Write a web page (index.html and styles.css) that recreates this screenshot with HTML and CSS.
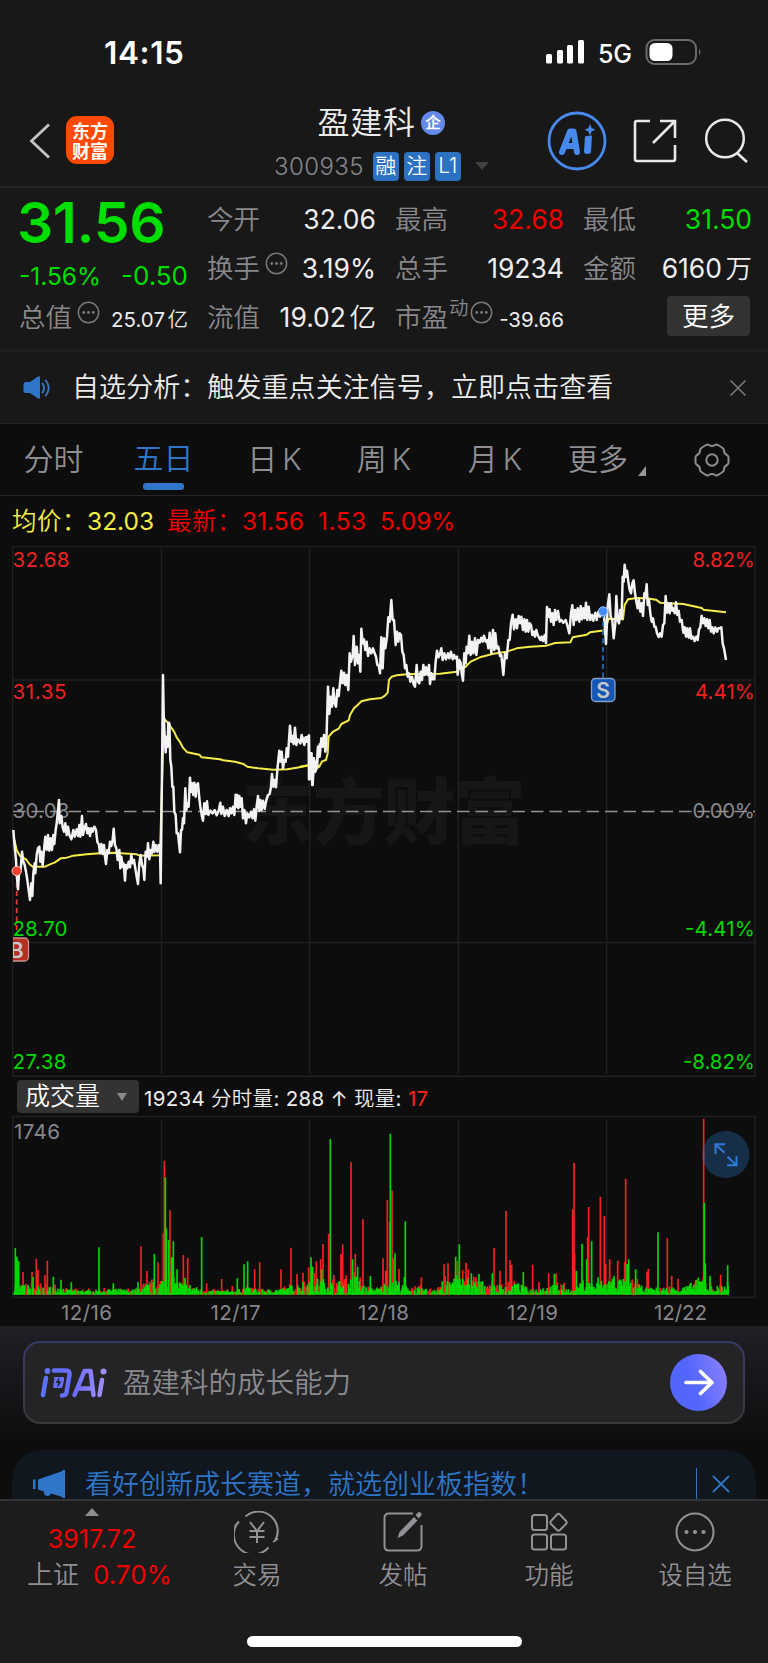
FILE: index.html
```html
<!DOCTYPE html>
<html lang="zh-CN">
<head>
<meta charset="utf-8">
<title>盈建科 300935</title>
<link rel="stylesheet" href="styles.css">
</head>
<body>
<svg class="defs" aria-hidden="true">
  <symbol id="dots" viewBox="0 0 24 24"><circle cx="12" cy="12" r="10.6" fill="none" stroke="#77777b" stroke-width="1.6"/><g fill="#77777b"><circle cx="7" cy="12" r="1.5"/><circle cx="12" cy="12" r="1.5"/><circle cx="17" cy="12" r="1.5"/></g></symbol>
  <linearGradient id="violet" x1="0" x2="1" y1="0.3" y2="0"><stop offset="0.3" stop-color="#5266fc"/><stop offset="1" stop-color="#9182fb"/></linearGradient>
  <linearGradient id="logo" gradientUnits="userSpaceOnUse" x1="0" x2="68" y1="0" y2="0"><stop offset="0" stop-color="#5872ff"/><stop offset=".5" stop-color="#6c6cff"/><stop offset="1" stop-color="#a594ff"/></linearGradient>
</svg>
<div class="phone">
  <div class="status">
    <span class="clock">14:15</span>
    <svg class="signals" viewBox="0 0 160 32" width="160" height="32">
      <g fill="#fff"><rect x="1" y="18" width="6" height="9.500" rx="1.500"/><rect x="12" y="14" width="6" height="13.500" rx="1.500"/><rect x="22" y="9" width="6" height="18.500" rx="1.500"/><rect x="33" y="4" width="6" height="23.500" rx="1.500"/></g>
      <text x="53" y="27" class="net" textLength="34">5G</text>
      <rect x="101.500" y="4" width="49.500" height="24" rx="8" fill="none" stroke="#6a6a6a" stroke-width="2"/>
      <rect x="104.500" y="7" width="23" height="18" rx="5.500" fill="#fff"/>
      <path d="M154 12.500q3 3.500 0 7z" fill="#6a6a6a"/>
    </svg>
  </div>

  <header class="head">
    <svg class="back" viewBox="0 0 22 36" width="22" height="36"><path d="M20 1.500 2.500 18 20 34.500" fill="none" stroke="#c4c4c4" stroke-width="2.800"/></svg>
    <div class="brand"><span>东方</span><span>财富</span></div>
    <div class="title">
      <div class="name">盈建科<b>企</b></div>
      <div class="code"><span>300935</span><i>融</i><i>注</i><i>L1</i><svg width="14" height="8" viewBox="0 0 14 8"><path d="M0 0h14L7 8z" fill="#404043"/></svg></div>
    </div>
    <svg class="ai" viewBox="0 0 60 60" width="60" height="60"><circle cx="30" cy="30" r="28" fill="none" stroke="#4889ee" stroke-width="2.800"/><path d="M15 41 23 20.500h3.500L30 41M18.500 35H29" fill="none" stroke="#4889ee" stroke-width="6" stroke-linejoin="round" stroke-linecap="round"/><path d="M38 25.500q3.500-1 7-1l-1 16q0 2.500-3.500 2.500T37 40.500zM43 13l1.600 4 3.900 1.800-3.900 1.700L43 24.500l-1.600-4-3.900-1.700 3.900-1.800z" fill="#4889ee"/></svg>
    <svg class="share" viewBox="0 0 44 44" width="44" height="44"><path d="M17 2H4Q2 2 2 4v36q0 2 2 2h36q2 0 2-2V26M27 2h15v17M42 2 20 24" fill="none" stroke="#e8e8e8" stroke-width="2.600"/></svg>
    <svg class="search" viewBox="0 0 46 46" width="46" height="46"><circle cx="21" cy="20.500" r="18.800" fill="none" stroke="#e8e8e8" stroke-width="2.500"/><path d="m33 35 10 9" stroke="#e8e8e8" stroke-width="2.600"/></svg>
  </header>

  <section class="quote">
    <div class="price">31.56</div>
    <div class="change"><span>-1.56%</span><span class="amt">-0.50</span></div>
    <div class="cell c1 r3"><label>总值</label><svg class="dots"><use href="#dots"/></svg><em class="small">25.07<u>亿</u></em></div>
    <div class="cell c2 r1"><label>今开</label><em>32.06</em></div>
    <div class="cell c2 r2"><label>换手</label><svg class="dots"><use href="#dots"/></svg><em>3.19%</em></div>
    <div class="cell c2 r3"><label>流值</label><em>19.02<u>亿</u></em></div>
    <div class="cell c3 r1"><label>最高</label><em class="red">32.68</em></div>
    <div class="cell c3 r2"><label>总手</label><em>19234</em></div>
    <div class="cell c3 r3"><label>市盈</label><small>动</small><svg class="dots tight"><use href="#dots"/></svg><em class="small">-39.66</em></div>
    <div class="cell c4 r1"><label>最低</label><em class="green">31.50</em></div>
    <div class="cell c4 r2"><label>金额</label><em>6160<u>万</u></em></div>
    <div class="cell c4 r3"><button class="more">更多</button></div>
  </section>

  <section class="notice">
    <svg width="28" height="24" viewBox="0 0 28 24"><path d="M3 6h4l8-5.500q2-1 2 1v20q0 2-2 1L7 17H3q-2.500 0-2.500-2.500v-6Q.5 6 3 6z" fill="#2f75c8"/><path d="M19.500 7.500q3 4.500 0 9M22.800 4.500q6 7.500 0 15" fill="none" stroke="#2f75c8" stroke-width="1.900" stroke-linecap="round"/></svg>
    <p>自选分析：触发重点关注信号，立即点击查看</p>
    <svg width="16" height="16" viewBox="0 0 16 16"><path d="m.5.500 15 15m0-15-15 15" stroke="#7d7d80" stroke-width="1.500"/></svg>
  </section>

  <nav class="tabs">
    <span>分时</span><span class="on">五日</span><span>日<u>K</u></span><span>周<u>K</u></span><span>月<u>K</u></span>
    <span class="drop">更多<svg width="8" height="10" viewBox="0 0 8 10"><path d="M8 0v10H0z" fill="#99999d"/></svg></span>
    <span><svg width="36" height="34" viewBox="-18 -17 36 34"><path d="M-6-15q2-1 3 0 3 2 6 0 1-1 3 0l4 2.500q2 1.500 2 3 0 3 3 4.500 1.500 1 1.500 2.500v5q0 1.500-1.500 2.500-3 1.500-3 4.500 0 1.500-2 3L6 15q-2 1-3 0-3-2-6 0-1 1-3 0l-4-2.500q-2-1.500-2-3 0-3-3-4.500-1.500-1-1.500-2.500v-5q0-1.500 1.500-2.500 3-1.500 3-4.500 0-1.500 2-3z" fill="none" stroke="#8d8d91" stroke-width="2"/><circle r="5.700" fill="none" stroke="#8d8d91" stroke-width="2"/></svg></span>
  </nav>

  <div class="legend"><span class="yellow">均价：</span><span class="yellow n1">32.03</span><span>最新：</span><span class="n2">31.56</span><span class="n3">1.53</span><span>5.09%</span></div>

  <svg class="chart" viewBox="0 546 768 532" width="768" height="532">
    <text x="242" y="838" class="watermark" textLength="284">东方财富</text>
    <g fill="none" stroke="#202022" stroke-width="1.400">
      <path d="M12.700 546.500H755V1076.300H12.700zM161.500 548.500V1074M309.700 548.500V1074M458.300 548.500V1074M606.700 548.500V1074M13 680H755M13 942.500H755"/>
    </g>
    <g class="axis red-axis"><text x="12.500" y="566.700" textLength="57">32.68</text><text x="12.500" y="699" textLength="54">31.35</text><text x="692.500" y="566.700" textLength="62.500">8.82%</text><text x="695" y="699" textLength="60">4.41%</text></g>
    <g class="axis gray-axis"><text x="12.500" y="817.700" textLength="57">30.03</text><text x="692.500" y="817.700" textLength="62.500">0.00%</text></g>
    <path d="M13 811.500H755" stroke="#929298" stroke-width="1.500" stroke-dasharray="12.500 6" stroke-dashoffset="0" fill="none"/>
    <path d="M16.700 874V936" stroke="#dc3c2c" stroke-width="1.800" stroke-dasharray="5 3.500"/>
    <g class="axis green-axis"><text x="12.500" y="936" textLength="55">28.70</text><text x="12.500" y="1068.500" textLength="54">27.38</text><text x="685" y="936" textLength="70">-4.41%</text><text x="683" y="1068.500" textLength="72">-8.82%</text></g>
    <g transform="translate(0 540) scale(.33333)" fill="none" stroke-linejoin="round">
      <path class="avg" d="M41 890 50 930 60 948 78 958 88 972 98 980 135 980 150 973 165 967 182 955 200 953 220 947 260 943 300 940 340 938 410 943 420 947 480 946 489 620 493 537 503 548 513 562 522 574 530 592 540 606 549 623 562 637 598 644 605 652 660 658 670 661 705 665 728 671 742 680 775 685 820 689 862 688 890 683 928 676 960 679"/>
      <path class="line" d="M40 870 44 920 48 960 50 1000 54 1048 58 985 62 990 66 935 70 965 74 975 78 995 82 1020 86 1050 90 1080 94 1030 97 1068 100 1000 104 970 106 1000 110 945 114 925 118 920 121 965 124 935 128 978 132 930 136 890 140 930 144 885 148 932 152 895 156 930 160 885 163 912 167 870 170 850 173 820 177 780 179 850 184 828 188 862 192 875 196 850 200 885 204 860 208 885 214 898 220 870 224 890 230 868 234 888 238 855 241 890 246 828 249 885 254 862 258 852 262 880 266 865 270 888 274 865 278 875 283 860 288 870 292 905 297 915 300 940 304 912 308 942 312 915 315 950 318 972 322 930 326 940 330 905 334 918 338 900 341 866 345 915 349 925 353 960 358 930 361 985 364 950 368 980 371 970 375 1022 378 975 382 985 386 965 390 982 394 945 398 970 402 960 406 985 410 1010 414 1032 418 970 422 945 426 975 430 985 433 1020 437 935 441 950 444 910 448 958 452 930 456 940 460 905 463 935 467 915 472 935 476 915 480 925 482 1030 486 700 489 405 491 520 494 590 497 637 500 590 503 620 505 548 508 550 511 660 514 680 517 740 520 740 523 815 527 825 530 880 534 880 537 910 540 937 543 870 546 870 549 835 552 850 556 745 559 810 563 790 566 800 570 713 573 755 576 730 580 765 583 728 587 770 590 735 594 730 598 775 601 800 606 830 609 842 613 790 617 822 621 784 625 825 631 812 638 820 644 810 650 826 656 812 661 788 664 822 669 800 674 828 680 810 686 828 690 805 694 820 699 800 703 825 707 764 709 800 712 765 715 805 718 768 721 800 725 775 729 835 733 810 738 850 742 820 748 832 753 815 758 835 762 808 766 842 770 800 774 768 778 812 781 780 785 810 789 782 794 806 799 780 804 765 809 762 813 740 816 702 820 740 824 720 828 742 832 690 835 660 838 632 841 665 845 635 849 685 853 660 857 665 860 625 864 650 867 600 870 557 874 605 877 588 881 612 885 563 889 615 893 598 897 602 901 610 905 585 909 600 913 615 917 592 921 605 925 590 927 586 929 718 934 640 937 735 941 655 944 695 948 665 951 685 954 620 957 650 960 610"/>
    </g>
    <g transform="translate(300 540) scale(.33333)" fill="none" stroke-linejoin="round">
      <path class="avg" d="M0 680 28 675 34 685 50 684 58 680 66 664 78 660 83 640 86 590 98 576 116 566 124 552 146 541 150 525 162 505 173 495 184 484 210 478 244 474 255 467 263 458 267 420 275 410 290 406 330 402 420 401 470 395 482 382 496 381 512 365 540 352 580 341 620 335 650 325 690 320 740 317 765 309 811 307 818 292 860 284 870 277 916 271 925 236 969 238 974 195 984 178 1010 174 1040 175 1068 179 1080 188 1150 192 1205 204 1210 209 1278 217"/>
      <path class="line" d="M0 610 6 590 10 605 14 610 18 592 22 605 26 588 27 718 34 640 38 735 42 655 46 695 50 680 55 620 59 650 64 595 68 620 72 585 76 635 79 610 84 440 88 522 92 470 96 500 100 445 104 490 108 500 112 450 116 468 120 430 124 392 128 430 132 398 136 435 140 405 145 450 149 340 153 365 158 345 161 288 165 375 170 320 174 370 177 345 181 395 184 266 188 310 192 298 196 330 200 305 204 348 209 325 214 340 219 325 224 340 228 350 232 375 236 375 240 400 244 292 248 385 252 295 256 325 261 290 265 232 269 245 274 180 278 240 282 240 287 315 291 275 295 305 299 280 303 285 307 335 311 345 315 385 319 375 323 410 327 400 331 425 336 410 340 430 345 440 350 375 354 425 358 430 362 395 366 420 370 375 374 405 378 382 383 405 387 375 390 432 394 400 398 418 403 418 407 365 411 332 415 352 419 345 424 325 428 360 433 340 438 358 444 340 448 355 453 335 458 358 462 345 466 355 471 350 473 404 478 360 482 370 485 400 489 422 493 340 497 370 500 320 504 340 508 287 512 345 516 305 520 340 525 295 529 345 534 300 539 308 544 293 548 305 552 287 557 305 561 300 565 325 569 278 574 340 579 270 583 330 586 280 590 325 595 320 600 348 604 345 610 405 615 340 620 355 625 300 629 300 633 250 638 224 642 268 647 238 651 265 656 228 660 250 664 230 669 270 673 238 677 275 681 240 685 275 689 250 693 255 697 285 701 275 705 290 709 270 713 285 717 292 721 300 725 290 729 303 734 285 738 310 741 201 746 230 749 208 753 245 757 220 761 255 765 210 769 240 774 213 779 245 784 240 790 248 797 240 803 260 808 280 813 220 817 196 821 255 825 210 829 240 833 205 838 245 842 198 846 238 850 205 854 235 858 188 862 240 866 200 871 240 876 225 880 242 886 218 890 240 895 215 900 230 905 218 912 225 918 312 923 200 928 163 932 230 937 240 941 295 946 250 949 168 953 240 957 250 961 210 965 235 968 110 971 125 974 74 978 110 981 92 985 125 989 150 993 160 997 130 1001 121 1005 160 1009 185 1013 205 1017 180 1021 215 1025 190 1029 228 1033 160 1036 170 1040 133 1043 195 1047 180 1051 220 1055 245 1059 235 1063 260 1067 260 1071 280 1076 291 1080 280 1085 290 1089 255 1093 250 1097 168 1101 218 1105 190 1109 220 1113 190 1117 212 1121 205 1124 220 1128 187 1132 225 1136 212 1140 245 1145 240 1150 278 1154 262 1158 290 1162 265 1166 293 1170 265 1174 296 1179 290 1184 303 1189 290 1193 300 1197 268 1201 262 1205 227 1209 250 1213 235 1217 258 1221 238 1225 265 1229 240 1233 275 1237 262 1241 280 1246 262 1251 275 1255 265 1260 265 1264 262 1268 310 1272 325 1278 360"/>
    </g>
    <circle cx="16.700" cy="871" r="4.700" fill="#ea402d" stroke="#ffc9c2"/>
    <path d="M603 613V678" stroke="#2068c4" stroke-width="1.800" stroke-dasharray="5 3.500"/>
    <circle cx="603" cy="611.300" r="4.500" fill="#418cf0" stroke="#9bc7ff"/>
    <rect x="591.500" y="678.500" width="23.500" height="23" rx="4" fill="#1557b4" stroke="#849fc4" stroke-width="1.300"/><text x="603.200" y="698" class="mark" text-anchor="middle">S</text>
    <svg x="13" y="935" width="20" height="30" viewBox="13 935 20 30"><rect x="5" y="938" width="23.500" height="23" rx="4" fill="#b92e22" stroke="#c59590" stroke-width="1.300"/><text x="16.700" y="957.500" class="mark" text-anchor="middle">B</text></svg>
  </svg>

  <div class="volbar"><button>成交量<svg width="10" height="8" viewBox="0 0 10 8"><path d="M0 0h10L5 8z" fill="#8b8b8f"/></svg></button><span>19234 分时量: 288 ↑ 现量: <b>17</b></span></div>

  <svg class="volume" viewBox="0 1115 768 211" width="768" height="211">
    <path d="M12.700 1116.500H755V1297.300H12.700zM161.500 1119V1296M309.700 1119V1296M458.300 1119V1296M606.700 1119V1296" fill="none" stroke="#202022" stroke-width="1.400"/>
    <g id="bars" transform="translate(0 1070) scale(.33333)"></g>
    <text class="dates" x="14" y="1138.500" textLength="46">1746</text>
    <g class="dates"><text x="61" y="1319.500" textLength="51">12/16</text><text x="210.500" y="1319.500" textLength="50">12/17</text><text x="358" y="1319.500" textLength="51">12/18</text><text x="507" y="1319.500" textLength="51">12/19</text><text x="654" y="1319.500" textLength="53">12/22</text></g>
    <circle cx="725.800" cy="1154.500" r="23.600" fill="#2f75c8" fill-opacity=".32"/>
    <path d="M715.500 1154V1144.200H725M716 1144.700l8.500 8M736.500 1156V1165.300H727M736 1164.800l-8.500-8" fill="none" stroke="#2f7bd8" stroke-width="2"/>
  </svg>

  <section class="ask">
    <div class="askbox">
      <svg class="asklogo" viewBox="0 0 68 32" width="68" height="32"><g fill="none" stroke="url(#logo)" stroke-width="4.500" stroke-linecap="round" stroke-linejoin="round"><path d="M6 11 3 28M14 3.500h12q4 0 3.500 4l-3 18q-.5 3-4.500 3"/><path d="M62 13 59.500 28"/><path d="M34.500 28 44.500 4h6l3 24M38.500 21.500H52"/></g><g fill="url(#logo)"><circle cx="7.500" cy="4" r="2.900"/><circle cx="63.500" cy="4.500" r="3"/><path d="M14 10h9q1.500 0 1.200 1.500l-1.500 8q-.3 1.500-2 1.500h-6q-1.800 0-1.500-1.500l1.300-8Q12.700 10 14 10z"/></g><path d="m19.500 10-4 6h2.500l-.8 5 4.300-6.500H19z" fill="#242427"/></svg>
      <span>盈建科的成长能力</span>
      <svg width="57" height="57" viewBox="0 0 57 57"><circle cx="28.500" cy="28.500" r="28.500" fill="url(#violet)"/><path d="M16 28.500h26M30.500 17.500 42 28.500 30.500 39.500" fill="none" stroke="#fff" stroke-width="3.600" stroke-linecap="round" stroke-linejoin="round"/></svg>
    </div>
    <div class="promo">
      <svg width="33" height="28" viewBox="0 0 33 28"><path d="M0 9.500h2.500V19H0zM5 9.500 29.500 1V0H32v28h-2.500v-1L18 23.500q-1 3-4 2.500-3.500-.5-3-4.500L5 19.500z" fill="#2f75c8"/></svg>
      <span>看好创新成长赛道，就选创业板指数！</span>
      <i></i>
      <svg width="18" height="18" viewBox="0 0 18 18"><path d="m1 1 16 16M17 1 1 17" stroke="#2f75c8" stroke-width="1.800"/></svg>
    </div>
  </section>

  <footer class="dock">
    <div class="index"><svg width="14" height="8" viewBox="0 0 14 8"><path d="M0 8h14L7 0z" fill="#8d8d91"/></svg><b>3917.72</b><p>上证<b>0.70%</b></p></div>
    <div class="item"><svg width="46" height="42" viewBox="-23 -21 46 42"><path d="M-11.500-15.500A19.300 19.300 0 0 1 17.500 9.500M11.500 15.500A19.300 19.300 0 0 1-18.500-10M-22-6l4-4.500M16 10l5-3.500M-7-10l7 9 7-9M0-1v12M-7.500-1h15M-7.500 5h15" fill="none" stroke="#919196" stroke-width="2"/></svg>交易</div>
    <div class="item"><svg width="42" height="42" viewBox="-21 -21 42 42"><path d="M10-18.500h-24q-4.500 0-4.500 4.500v28q0 4.500 4.500 4.500h28q4.500 0 4.500-4.500V-7" fill="none" stroke="#919196" stroke-width="2"/><path d="m-5.500 6 2-6 14.500-15 3.500 3.500L0 3.500zM12.500-17l3-3q3.500 0 3 3.500l-3 3z" fill="#919196"/></svg>发帖</div>
    <div class="item"><svg width="40" height="42" viewBox="-20 -21 40 42"><g fill="none" stroke="#919196" stroke-width="2"><rect x="-17" y="-17" width="15" height="15" rx="2.500"/><rect x="-17" y="2.500" width="15" height="15" rx="2.500"/><rect x="2" y="2.500" width="15" height="15" rx="2.500"/><path d="M8-17.500q1.500-1.500 3 0l6 6.500q1.500 1.500 0 3l-6 6q-1.500 1.500-3 0l-6-6q-1.500-1.500 0-3z"/></g></svg>功能</div>
    <div class="item"><svg width="42" height="42" viewBox="-21 -21 42 42"><circle r="18.500" fill="none" stroke="#919196" stroke-width="2"/><g fill="#919196"><circle cx="-8.500" r="2.100"/><circle r="2.100"/><circle cx="8.500" r="2.100"/></g></svg>设自选</div>
    <div class="home"></div>
  </footer>
</div>
<script src="volume.js"></script>
</body>
</html>
```
FILE: styles.css
```css
* { box-sizing: border-box; }
body { margin: 0; background: #0d0d0d; color: #ededed; font-family: Inter, "Noto Sans CJK SC DemiLight", "Noto Sans CJK SC", sans-serif; font-weight: 350; }
.defs { position: absolute; width: 0; height: 0; }
.phone { width: 768px; height: 1663px; overflow: hidden; display: flex; flex-direction: column; }
.phone svg { display: block; flex: none; }
b, i, em, u { font-weight: inherit; font-style: normal; text-decoration: none; }
p { margin: 0; }

.status { height: 100px; background: #181818; display: flex; justify-content: space-between; align-items: flex-start; padding: 36px 68px 0 104px; }
.clock { font-size: 31.500px; line-height: 34px; font-weight: 600; color: #fff; letter-spacing: .6px; }
.signals { margin-right: -5px; }
.net { font-size: 25px; fill: #fff; font-weight: 500; }

.head { height: 88px; background: #181818; border-bottom: 2px solid #262628; display: flex; align-items: flex-start; padding-left: 29px; }
.back { margin-top: 23px; }
.brand { width: 48px; height: 48px; margin: 16px 0 0 15px; border-radius: 11px; background: #ff4800; color: #fff; display: flex; flex-direction: column; align-items: center; justify-content: center; font-family: "Noto Sans CJK SC", sans-serif; font-weight: 700; font-size: 18px; line-height: 20px; }
.title { margin-left: 160px; width: 217px; }
.name { display: flex; align-items: center; height: 44px; margin: 1px 0 0 43.500px; font-size: 32px; line-height: 44px; letter-spacing: .8px; }
.name b { width: 24px; height: 24px; border-radius: 50%; margin-left: 5px; background: #648ae8; color: #fff; font-size: 15px; line-height: 24px; text-align: center; font-weight: 700; letter-spacing: 0; }
.code { display: flex; align-items: center; height: 30px; margin-top: 6px; font-size: 24px; letter-spacing: .4px; color: #87878c; }
.code span { width: 99px; }
.code i { width: 25.500px; height: 29px; margin-right: 5.500px; border-radius: 4px; background: #2c71c2; color: #fff; font-size: 21px; line-height: 28px; text-align: center; letter-spacing: 0; }
.code svg { margin-left: 9px; }
.ai { margin: 11px 0 0 56px; }
.share { margin: 19px 0 0 26px; }
.search { margin: 18px 0 0 27px; }

.quote { height: 164px; background: #181818; border-bottom: 2px solid #1f1f20; display: grid; grid-template-columns: 169px 169px 169px 169px; grid-template-rows: 49px 49px 49px; column-gap: 19px; padding: 6px 0 0 19px; }
.price { grid-area: 1 / 1; font-size: 57px; line-height: 58px; font-weight: 600; color: #0d0; letter-spacing: -.4px; height: 49px; margin-left: -2px; }
.change { grid-area: 2 / 1; display: flex; justify-content: space-between; align-items: flex-end; font-size: 24.500px; line-height: 30px; color: #0d0; padding-bottom: 1px; font-weight: 400; }
.amt { font-size: 26px; }
.c1 { grid-column: 1; } .c2 { grid-column: 2; } .c3 { grid-column: 3; } .c4 { grid-column: 4; }
.r1 { grid-row: 1; } .r2 { grid-row: 2; } .r3 { grid-row: 3; }
.cell { display: flex; align-items: center; font-size: 26.500px; line-height: 40px; white-space: nowrap; }
.cell label { color: #88888c; width: 54px; flex: none; }
.cell em { margin-left: auto; font-weight: 400; padding-top: 1px; }
.cell em u { margin-left: 3.500px; font-weight: 350; }
.cell em.small { font-size: 20.500px; padding-top: 7px; }
.cell .small u { margin-left: 2.500px; }
.cell small { font-size: 19.500px; color: #88888c; margin: -17px 0 0 0; width: 21px; }
.cell .dots { width: 23px; height: 23px; margin: -9px 0 0 4px; }
.cell .tight { margin-left: 0; }
.red { color: #f00000; } .green { color: #0d0; }
.more { margin: -2px 2px 0 auto; width: 83px; height: 40px; border: 0; border-radius: 4px; background: #333; color: #fff; font: inherit; line-height: 38px; padding: 0; }

.notice { height: 72px; background: #181818; border-bottom: 1px solid #242426; display: flex; align-items: center; padding: 0 22px 0 23px; }
.notice p { font-size: 27px; line-height: 40px; letter-spacing: .07px; margin: 1px auto 0 21px; }

.tabs { height: 72px; border-bottom: 1px solid #262628; display: grid; grid-template-columns: 107px 111px 113px 106px 116px 90px 126px; font-size: 30px; line-height: 69px; color: #8f8f93; }
.tabs span { display: flex; justify-content: center; align-items: center; }
.tabs span:last-child { padding-left: 12px; }
.tabs u { margin-left: 5px; }
.tabs .on { color: #2f75c8; flex-direction: column; justify-content: flex-start; padding-left: 2px; }
.tabs .on::after { content: ""; width: 41px; height: 6.500px; border-radius: 3px; background: #2f75c8; margin-top: -10px; }
.drop svg { margin: 22px -18px 0 10px; }

.legend { height: 50px; display: flex; align-items: center; padding-left: 12px; font-size: 24.500px; line-height: 50px; color: #f00000; white-space: nowrap; font-weight: 400; }
.legend span:nth-child(odd) { letter-spacing: .5px; }
.legend .yellow { color: #f4ec44; }
.legend .n1 { width: 80px; } .legend .n2 { width: 76px; } .legend span.n3 { width: 62px; } 

.axis { font-size: 20.500px; font-weight: 400; }
.red-axis { fill: #f02020; } .gray-axis { fill: #87878c; } .green-axis { fill: #00d800; }
.watermark { font-family: "Noto Sans CJK SC", sans-serif; font-size: 72px; font-weight: 900; fill: #161617; }
.avg { stroke: #f6ec48; stroke-width: 6; }
.line { stroke: #f3f3f3; stroke-width: 7.500; }
.mark { font-size: 21px; font-weight: 600; fill: #c8c8c8; }

.volbar { height: 37px; display: flex; align-items: center; padding: 0 0 0 17px; font-size: 20.500px; font-weight: 400; white-space: pre; }
.volbar button { width: 122px; height: 33px; border: 0; border-radius: 4px; background: #333; color: #fff; font: inherit; font-size: 25px; line-height: 31px; padding: 0 12px 0 8px; display: flex; align-items: center; justify-content: space-between; margin-right: 5px; }
.volbar > span { letter-spacing: .3px; }
.volbar b { color: #f22; }
.dates { font-size: 20.500px; fill: #87878c; font-weight: 400; }

.ask { height: 173px; padding: 15px 12px 0; overflow: hidden; background: linear-gradient(#201f26, #0d0d0e 114px); }
.askbox { height: 83px; margin: 0 11px; border: 2px solid transparent; border-radius: 17px; background: linear-gradient(#242427, #242427) padding-box, linear-gradient(#373a67, #3c3838) border-box; display: flex; align-items: center; padding: 0 16px 0 15px; }
.askbox span { margin: 0 auto 0 15px; font-size: 28.500px; line-height: 40px; color: #8a8a8c; }
.promo { height: 76px; margin-top: 26px; border-radius: 30px; background: #10171f; color: #2f75c8; display: flex; align-items: flex-start; padding: 0 26px 0 21px; font-size: 27px; line-height: 34px; }
.promo svg:first-child { margin-top: 20px; }
.promo span { margin: 18px auto 0 19px; }
.promo i { width: 1.500px; height: 40px; margin: 18px 15px 0 0; background: #2f75c8; }
.promo svg:last-child { margin-top: 25px; }

.dock { height: 164px; background: #1c1c1c; border-top: 2px solid #343436; display: grid; grid-template-columns: 184px 146px 146px 146px 146px; grid-template-rows: 135px 12px; color: #8f8f94; font-size: 24.500px; }
.index { padding: 7px 0 0; width: 184px; display: flex; flex-direction: column; align-items: center; line-height: 36px; }
.index b { color: #f00000; font-weight: 400; }
.index > b { font-size: 25px; margin-top: 5px; }
.index p { display: flex; gap: 14px; font-size: 26px; padding-left: 15px; }
.item { display: flex; flex-direction: column; align-items: center; padding-top: 10px; line-height: 36px; gap: 4px; }
.home { grid-column: 1 / -1; justify-self: center; width: 275px; height: 11px; border-radius: 6px; background: #fff; }
```
FILE: volume.js
```js
// Minute volume bars. Units: 1/3 px; baseline y = 674.
(function () {
  var NS = "http://www.w3.org/2000/svg";
  var BASE = 674;
  var seed = 7;
  function rnd() { seed = (seed * 16807) % 2147483647; return seed / 2147483647; }
  // [x, typical height, share of red bars]
  var level = [[42,60,0],[60,40,.3],[100,45,.5],[140,30,.5],[180,40,.2],[200,18,.4],[300,16,.3],[340,22,.1],[400,18,.3],
    [440,45,.4],[480,65,.5],[500,110,.2],[530,65,.1],[570,45,.5],[610,14,.5],[700,14,.4],[740,28,.3],[800,16,.6],
    [850,26,.3],[900,52,.5],[930,80,.2],[990,65,.4],[1030,60,.5],[1070,90,.1],[1100,26,.3],[1140,30,.2],[1180,90,.2],
    [1210,36,.3],[1260,28,.3],[1290,16,.6],[1330,60,.4],[1370,95,.4],[1390,80,.2],[1440,65,.7],[1480,36,.5],[1540,60,.3],
    [1590,20,.4],[1680,50,.3],[1720,10,.5],[1750,65,.2],[1790,55,.1],[1840,85,.1],[1900,50,.5],[1940,26,.4],[1990,28,.3],
    [2060,36,.3],[2110,90,.1],[2140,26,.4],[2186,65,.2]];
  // [x, top, red]
  var peaks = [[46,534,0],[51,560,0],[56,574,0],[69,606,1],[96,606,1],[99,620,0],[109,566,1],[114,600,1],[135,615,1],[142,572,1],
    [160,620,0],[183,629,0],[214,637,0],[297,532,0],[340,640,0],[423,529,1],[414,636,0],[441,603,1],[463,552,0],[474,577,1],[490,490,1],
    [493,272,1],[496,322,0],[499,475,0],[510,421,1],[506,510,0],[515,562,0],[520,514,0],[531,598,0],[550,555,1],[563,564,1],[555,624,0],
    [605,501,0],[620,640,1],[665,627,1],[697,648,1],[732,583,0],[743,574,0],[712,625,0],[764,598,1],[779,577,1],[843,598,1],[873,533,1],[891,612,1],
    [909,608,1],[926,592,1],[933,562,0],[938,590,0],[949,574,1],[962,568,1],[969,522,1],[965,598,0],[986,492,1],[991,207,0],
    [1001,615,1],[1023,552,1],[1028,523,1],[1053,277,1],[1058,568,0],[1066,552,1],[1073,590,0],[1089,448,1],[1111,618,0],
    [1149,565,1],[1157,602,1],[1162,389,1],[1169,455,1],[1176,361,1],[1171,191,0],[1180,564,1],[1185,550,0],[1197,597,1],[1216,454,0],
    [1213,622,0],[1264,622,1],[1332,583,1],[1344,580,1],[1367,560,0],[1372,573,1],[1378,523,0],[1388,600,1],[1398,578,1],[1405,598,1],[1414,610,0],[1437,612,0],
    [1482,534,1],[1477,610,0],[1500,602,1],[1518,423,1],[1530,570,1],[1535,584,1],[1570,606,0],[1598,584,1],[1617,636,1],[1646,610,1],
    [1663,612,0],[1668,610,1],[1718,418,1],[1722,279,1],[1724,550,1],[1729,603,0],[1746,521,0],[1763,502,1],[1760,568,0],[1766,411,1],[1775,514,0],
    [1794,622,0],[1801,380,1],[1813,438,1],[1817,582,1],[1829,568,1],[1842,618,0],[1853,572,1],[1874,575,1],[1877,326,1],[1881,582,0],[1886,568,0],
    [1907,598,0],[1912,626,1],[1941,605,1],[1945,596,1],[1974,487,0],[2002,505,1],[2015,617,1],[2034,626,1],[2088,630,0],
    [2111,146,1],[2113,398,0],[2116,580,0],[2130,617,0],[2162,614,1],[2183,586,0]];
  function at(x) {
    for (var i = 1; i < level.length; i++) {
      if (x <= level[i][0]) {
        var a = level[i - 1], b = level[i], t = (x - a[0]) / (b[0] - a[0]);
        return [a[1] + (b[1] - a[1]) * t, a[2] + (b[2] - a[2]) * t];
      }
    }
    return [20, .2];
  }
  var red = "", green = "", topRed = "", topGreen = "";
  function bar(x, top) { return "M" + x.toFixed(1) + " " + BASE + "V" + top.toFixed(1); }
  for (var x = 42; x < 2187; x += 2.2) {
    var l = at(x), h = 6 + l[0] * Math.pow(rnd(), 1.3) * .8;
    if (rnd() < l[1]) red += bar(x, BASE - h); else green += bar(x, BASE - h * .8);
  }
  peaks.forEach(function (p) {
    if (p[2]) topRed += bar(p[0], p[1]); else topGreen += bar(p[0], p[1]);
  });
  [[topRed, "#f52020"], [red, "#f52020"], [topGreen, "#00d800"], [green, "#00d800"]].forEach(function (g) {
    var path = document.createElementNS(NS, "path");
    path.setAttribute("d", g[0]);
    path.setAttribute("stroke", g[1]);
    path.setAttribute("stroke-width", "5");
    document.getElementById("bars").appendChild(path);
  });
})();
```
